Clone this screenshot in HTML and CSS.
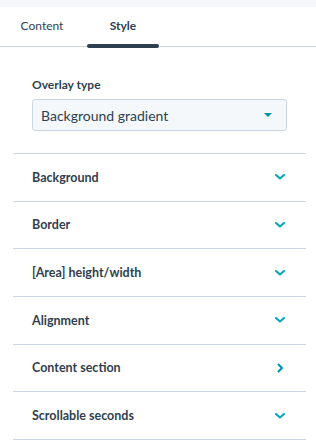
FILE: index.html
```html
<!DOCTYPE html>
<html lang="en">
<head>
    <meta charset="UTF-8">
    <title>Style panel</title>
    <link rel="stylesheet" href="styles.css">
</head>
<body>
    <div class="topbar"></div>
    <div class="tabs">
        <div class="tab">Content</div>
        <div class="tab active">Style</div>
    </div>
    <div class="panel">
        <div class="field">
            <label class="field-label">Overlay type</label>
            <div class="select">
                <span>Background gradient</span>
                <span class="caret"></span>
            </div>
        </div>
        <div class="section">
            <span>Background</span>
            <svg class="chev" width="10" height="6" viewBox="0 0 10 6"><path d="M1 1l4 3.5L9 1" fill="none" stroke="#00a4bd" stroke-width="2" stroke-linecap="round" stroke-linejoin="round"/></svg>
        </div>
        <div class="section">
            <span>Border</span>
            <svg class="chev" width="10" height="6" viewBox="0 0 10 6"><path d="M1 1l4 3.5L9 1" fill="none" stroke="#00a4bd" stroke-width="2" stroke-linecap="round" stroke-linejoin="round"/></svg>
        </div>
        <div class="section">
            <span>[Area] height/width</span>
            <svg class="chev" width="10" height="6" viewBox="0 0 10 6"><path d="M1 1l4 3.5L9 1" fill="none" stroke="#00a4bd" stroke-width="2" stroke-linecap="round" stroke-linejoin="round"/></svg>
        </div>
        <div class="section">
            <span>Alignment</span>
            <svg class="chev" width="10" height="6" viewBox="0 0 10 6"><path d="M1 1l4 3.5L9 1" fill="none" stroke="#00a4bd" stroke-width="2" stroke-linecap="round" stroke-linejoin="round"/></svg>
        </div>
        <div class="section">
            <span>Content section</span>
            <svg class="chev" width="10" height="10" viewBox="0 0 10 10"><path d="M3.5 1.5l3.5 3.5-3.5 3.5" fill="none" stroke="#0091ae" stroke-width="2" stroke-linecap="round" stroke-linejoin="round"/></svg>
        </div>
        <div class="section">
            <span>Scrollable seconds</span>
            <svg class="chev" width="10" height="6" viewBox="0 0 10 6"><path d="M1 1l4 3.5L9 1" fill="none" stroke="#00a4bd" stroke-width="2" stroke-linecap="round" stroke-linejoin="round"/></svg>
        </div>
    </div>
</body>
</html>
```

FILE: styles.css
```css
body {
    margin: 0;
    font-family: 'Lato', sans-serif;
    color: #2f3f50;
    background: #fff;
}
.topbar {
    height: 7px;
    background-color: #f5f8fa;
}
.tabs {
    display: flex;
    height: 39px;
    border-bottom: 1px solid #cbd6e2;
    padding-left: 6px;
}
.tab {
    width: 72px;
    display: flex;
    align-items: center;
    justify-content: center;
    font-size: 12px;
    position: relative;
    padding-bottom: 2px;
}
.tab.active {
    margin-left: 9px;
    font-weight: bold;
}
.tab.active:after {
    content: "";
    position: absolute;
    left: 0;
    right: 0;
    bottom: -2px;
    height: 4px;
    border-radius: 2px;
    background-color: #2e3f50;
}
.panel {
    margin: 0 10px 0 13px;
}
.field {
    padding: 30px 19px 22px;
    border-bottom: 1px solid #cbd6e2;
}
.field-label {
    display: block;
    font-size: 12px;
    font-weight: bold;
    margin-bottom: 7px;
}
.select {
    display: flex;
    align-items: center;
    justify-content: space-between;
    height: 30px;
    padding: 0 14px 0 8px;
    background-color: #f5f8fa;
    border: 1px solid #cbd6e2;
    border-radius: 3px;
    font-size: 14px;
}
.caret {
    width: 0;
    height: 0;
    border-left: 4px solid transparent;
    border-right: 4px solid transparent;
    border-top: 4px solid #0091ae;
}
.section {
    display: flex;
    align-items: center;
    justify-content: space-between;
    height: 46.67px;
    padding: 0 21px 0 19px;
    border-bottom: 1px solid #cbd6e2;
    font-size: 12.5px;
    font-weight: bold;
}
```
